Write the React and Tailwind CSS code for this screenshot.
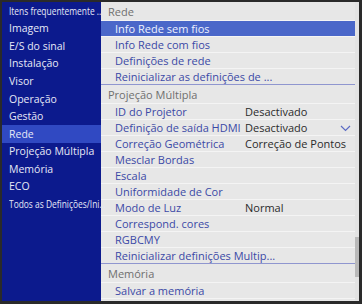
import React from "react";

const leftItems = [
  { label: "Itens frequentemente ...", long: true },
  { label: "Imagem" },
  { label: "E/S do sinal" },
  { label: "Instalação" },
  { label: "Visor" },
  { label: "Operação" },
  { label: "Gestão" },
  { label: "Rede", active: true },
  { label: "Projeção Múltipla" },
  { label: "Memória" },
  { label: "ECO" },
  { label: "Todos as Definições/Ini...", long: true },
];

const groups = [
  {
    title: "Rede",
    rows: [
      { label: "Info Rede sem fios", active: true },
      { label: "Info Rede com fios" },
      { label: "Definições de rede" },
      { label: "Reinicializar as definições de ..." },
    ],
  },
  {
    title: "Projeção Múltipla",
    rows: [
      { label: "ID do Projetor", value: "Desactivado" },
      { label: "Definição de saída HDMI", value: "Desactivado", chevron: true },
      { label: "Correção Geométrica", value: "Correção de Pontos" },
      { label: "Mesclar Bordas" },
      { label: "Escala" },
      { label: "Uniformidade de Cor" },
      { label: "Modo de Luz", value: "Normal" },
      { label: "Correspond. cores" },
      { label: "RGBCMY" },
      { label: "Reinicializar definições Multip..." },
    ],
  },
  {
    title: "Memória",
    rows: [{ label: "Salvar a memória" }],
  },
];

const Chevron = () => (
  <svg width="11" height="7" viewBox="0 0 11 7" className="absolute left-[239px] top-[5px]">
    <path d="M1 1 L5.5 5.5 L10 1" fill="none" stroke="#5b6bc4" strokeWidth="1.2" />
  </svg>
);

const Row = ({ row, last }) => (
  <div
    className={`relative flex items-center h-[16px] ${
      last ? "border-b border-[#8f96cf]" : "border-b border-[#f4f4f4]"
    } ${row.active ? "bg-[#4a67c9] text-[#eef2ff]" : "text-[#3b49a6]"}`}
  >
    <span className={`pl-[14px] whitespace-nowrap ${row.value ? "w-[144px] shrink-0" : ""}`}>{row.label}</span>
    {row.value && <span className="text-[#2b2b2b] whitespace-nowrap">{row.value}</span>}
    {row.chevron && <Chevron />}
  </div>
);

const App = () => {
  return (
    <div
      className="w-[362px] h-[304px] bg-[#2a2a2a] pt-[2px] pl-[2px] pr-[3px] pb-[3px] text-[11px] leading-none"
      style={{ fontFamily: '"Open Sans", "Noto Sans", sans-serif' }}
    >
      <div className="flex h-full">
        {/* Left menu */}
        <div className="w-[99px] shrink-0 h-full bg-[#0c1a8d] flex flex-col">
          {leftItems.map((item) => (
            <div
              key={item.label}
              className={`h-[17.6px] flex items-center pl-[7px] whitespace-nowrap text-[10.5px] text-[#e6e8f6] ${
                item.active ? "bg-[#3049c2]" : ""
              }`}
            >
              <span className={item.long ? "inline-block origin-left scale-x-[0.8]" : ""}>{item.label}</span>
            </div>
          ))}
        </div>

        {/* Right panel */}
        <div className="flex-1 h-full bg-[#e7e7e7] flex overflow-hidden">
          <div className="flex-1 flex flex-col">
            {groups.map((g) => (
              <div key={g.title}>
                <div className="h-[19px] flex items-center pl-[7px] text-[#6f6f6f] border-b border-[#f4f4f4]">
                  {g.title}
                </div>
                {g.rows.map((r, i) => (
                  <Row key={r.label} row={r} last={i === g.rows.length - 1 && g.title !== "Memória"} />
                ))}
              </div>
            ))}
          </div>
          {/* scrollbar */}
          <div className="w-[4px] h-full bg-[#e3e3e3] flex flex-col">
            <div className="h-[235px]" />
            <div className="h-[40px] bg-[#b9b9b9]" />
          </div>
        </div>
      </div>
    </div>
  );
};

export default App;
